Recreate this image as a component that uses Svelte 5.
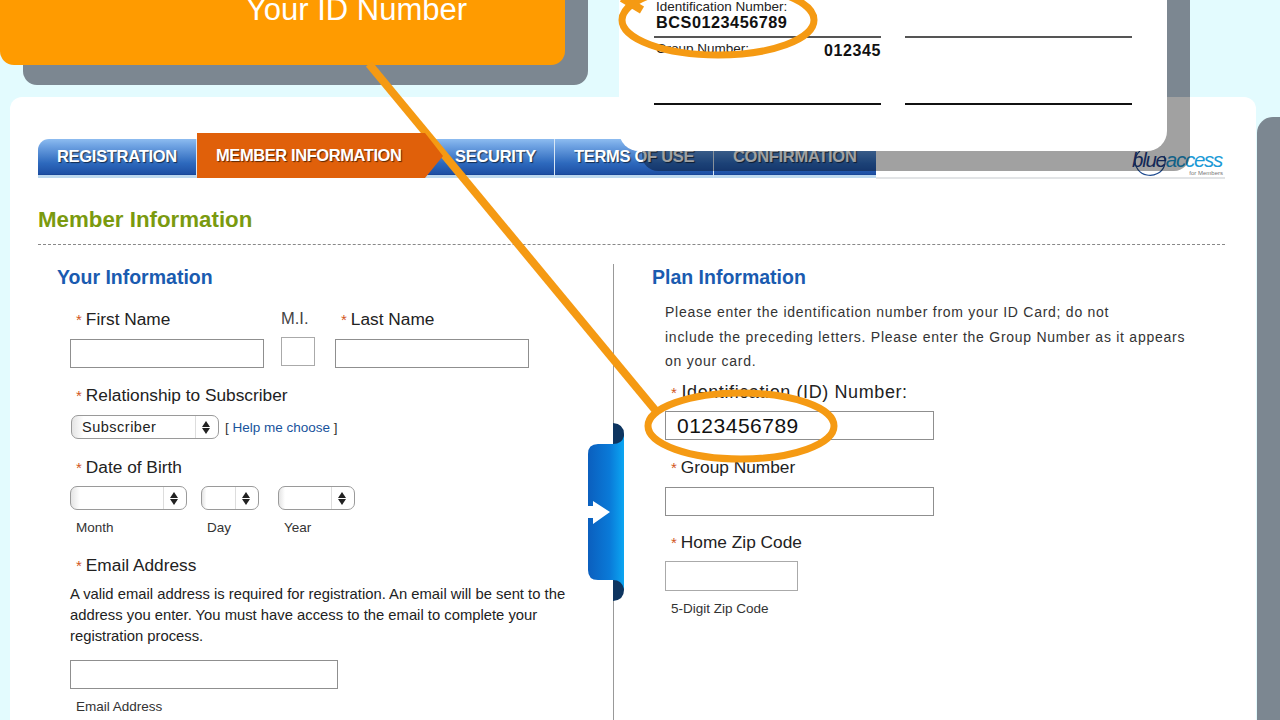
<script>
  const tabs = [
    { name: 'REGISTRATION', cls: 'first' },
    { name: 'MEMBER INFORMATION', cls: 'active' },
    { name: 'SECURITY', cls: 'security' },
    { name: 'TERMS OF USE', cls: 'terms' },
    { name: 'CONFIRMATION', cls: 'confirm' }
  ];
</script>

<div class="stage">
  <div class="side"></div>
  <div class="callout-shadow"></div>
  <div class="card-shadow"></div>

  <main class="sheet">
    <nav class="tabbar">
      {#each tabs as tab}
        <div class="tab {tab.cls}">{tab.name}</div>
      {/each}
      <div class="rest">
        <div class="logo">
          <svg class="ring" width="36" height="32" viewBox="0 0 36 32">
            <path d="M8 4 A15 14 0 1 0 32 9" fill="none" stroke="#1f4b8f" stroke-width="1.2" />
          </svg>
          <div class="logo-word"><span class="blue">blue</span><span class="access">access</span></div>
          <div class="logo-sub">for Members</div>
        </div>
      </div>
    </nav>

    <h2>Member Information</h2>

    <div class="columns">
      <section class="left">
        <h3>Your Information</h3>

        <div class="names">
          <div class="first-name">
            <div class="lbl"><b>*</b>First Name</div>
            <input class="box" type="text" />
          </div>
          <div class="mi">
            <div class="lbl plain">M.I.</div>
            <input class="box" type="text" />
          </div>
          <div class="last-name">
            <div class="lbl"><b>*</b>Last Name</div>
            <input class="box" type="text" />
          </div>
        </div>

        <div class="lbl rel"><b>*</b>Relationship to Subscriber</div>
        <div class="rel-row">
          <div class="sel sel-rel">Subscriber<span class="spin"></span></div>
          <span class="help">[ <a href="#help">Help me choose</a> ]</span>
        </div>

        <div class="lbl dob"><b>*</b>Date of Birth</div>
        <div class="dates">
          <div class="date month"><div class="sel"><span class="spin"></span></div><small>Month</small></div>
          <div class="date day"><div class="sel"><span class="spin"></span></div><small>Day</small></div>
          <div class="date year"><div class="sel"><span class="spin"></span></div><small>Year</small></div>
        </div>

        <div class="lbl email"><b>*</b>Email Address</div>
        <p class="note">A valid email address is required for registration. An email will be sent to the address you enter. You must have access to the email to complete your registration process.</p>
        <input class="box email-box" type="text" />
        <small class="email-sub">Email Address</small>
      </section>

      <section class="right">
        <h3>Plan Information</h3>
        <p class="plan-note">Please enter the identification number from your ID Card; do not<br />include the preceding letters. Please enter the Group Number as it appears<br />on your card.</p>

        <div class="lbl id-lbl"><b>*</b>Identification (ID) Number:</div>
        <input class="box wide id-box" type="text" value="0123456789" />

        <div class="lbl group-lbl"><b>*</b>Group Number</div>
        <input class="box wide group-box" type="text" />

        <div class="lbl zip-lbl"><b>*</b>Home Zip Code</div>
        <input class="box zip-box" type="text" />
        <small class="zip-sub">5-Digit Zip Code</small>
      </section>
    </div>
  </main>

  <div class="card-shade"></div>

  <div class="callout">Your ID Number</div>

  <div class="card">
    <div class="cell id-cell">
      <span>Identification Number:</span>
      <strong>BCS0123456789</strong>
    </div>
    <div class="cell"></div>
    <div class="cell group-cell">
      <span>Group Number:</span>
      <strong>012345</strong>
    </div>
    <div class="cell"></div>
  </div>

  <svg class="flap" width="36" height="178" viewBox="0 0 36 178">
    <defs>
      <linearGradient id="flapfill" x1="0" x2="1" y1="0" y2="0">
        <stop offset="0" stop-color="#0b5fbe" />
        <stop offset="0.6" stop-color="#0a7ad8" />
        <stop offset="1" stop-color="#0ba6f2" />
      </linearGradient>
    </defs>
    <path d="M25 24 V0 Q36 1 36 11 V167 Q36 177 25 178 V154 Q34 154 36 146 V32 Q34 24 25 24 Z" fill="#0e3560" />
    <path d="M10 21 H25 Q34 21 36 13 V166 Q34 157 25 157 H10 Q0 157 0 147 V31 Q0 21 10 21 Z" fill="url(#flapfill)" />
    <path d="M0 83 H5 V78 L22 89 L5 101 V95 H0 Z" fill="#fff" />
  </svg>

  <svg class="marks" width="1280" height="720" viewBox="0 0 1280 720">
    <path d="M369 64 L656 411" fill="none" stroke="#f59a13" stroke-width="8" />
    <ellipse cx="741" cy="426" rx="93" ry="33" fill="none" stroke="#f59a13" stroke-width="7" />
    <ellipse cx="718" cy="20" rx="96" ry="35" fill="none" stroke="#f59a13" stroke-width="7" />
    <path d="M622 -2 L642 10" fill="none" stroke="#f59a13" stroke-width="8" />
  </svg>
</div>

<style>
  :global(body) {
    margin: 0;
    background: #e3fbfe;
  }

  .stage {
    position: relative;
    width: 1280px;
    height: 720px;
    overflow: hidden;
    background: #e3fbfe;
    font-family: "Liberation Sans", Arial, sans-serif;
    color: #222;
  }

  /* things lying on top of the page */
  .side {
    position: absolute;
    left: 1257px;
    top: 117px;
    width: 60px;
    height: 640px;
    background: #7c8791;
    border-radius: 16px 0 0 0;
  }
  .callout-shadow {
    position: absolute;
    left: 23px;
    top: -30px;
    width: 565px;
    height: 115px;
    background: #7c8791;
    border-radius: 14px;
  }
  .card-shadow {
    position: absolute;
    left: 1100px;
    top: 0;
    width: 90px;
    height: 110px;
    background: #7c8791;
  }
  .card-shade {
    position: absolute;
    left: 642px;
    top: 97px;
    width: 548px;
    height: 74px;
    background: rgba(0, 0, 0, 0.37);
    border-radius: 0 0 16px 16px;
  }
  .callout {
    position: absolute;
    left: 0;
    top: -20px;
    width: 565px;
    height: 85px;
    box-sizing: border-box;
    padding: 12px 0 0 148px;
    text-align: center;
    background: #ff9b00;
    border-radius: 14px;
    color: #fff;
    font-size: 31px;
    line-height: 36px;
  }
  .card {
    position: absolute;
    left: 619px;
    top: -20px;
    width: 548px;
    height: 171px;
    box-sizing: border-box;
    padding: 20px 35px 0;
    background: #fff;
    border-radius: 0 0 20px 20px;
    display: grid;
    grid-template-columns: 227px 227px;
    grid-template-rows: 38px 67px;
    column-gap: 24px;
  }
  .cell {
    border-bottom: 2px solid #111;
    box-sizing: border-box;
    position: relative;
  }
  .cell:nth-child(-n+2) {
    border-bottom-color: #555;
  }
  .cell span {
    font-size: 13.5px;
    line-height: 14px;
    padding-left: 2px;
    display: block;
  }
  .cell strong {
    font-size: 16.3px;
    line-height: 17px;
    padding-left: 2px;
    letter-spacing: 0.5px;
    display: block;
    color: #111;
  }
  .group-cell {
    display: flex;
    justify-content: space-between;
    align-items: flex-start;
    padding-top: 4px;
  }
  .group-cell strong {
    letter-spacing: 0.6px;
    font-size: 16px;
  }
  .flap {
    position: absolute;
    left: 588px;
    top: 423px;
  }
  .marks {
    position: absolute;
    left: 0;
    top: 0;
  }

  /* the page itself */
  .sheet {
    position: relative;
    width: 1246px;
    height: 660px;
    margin-left: 10px;
    box-sizing: border-box;
    padding: 42px 31px 0 28px;
    background: #fff;
    border-radius: 12px;
    top: 97px;
  }
  .tabbar {
    display: flex;
    align-items: flex-start;
    height: 40px;
  }
  .tab {
    height: 39px;
    box-sizing: border-box;
    border-bottom: 3px solid #bcd8ee;
    color: #fff;
    font-size: 16.5px;
    font-weight: bold;
    letter-spacing: -0.3px;
    line-height: 35px;
    white-space: nowrap;
    text-shadow: 1px 1px 1px rgba(0, 0, 0, 0.6);
    background: linear-gradient(#8dbcf0 0%, #6ea2e2 18%, #2d69bd 62%, #1d4fa4 90%, #10307a 94%);
    background-origin: border-box;
    border-right: 1px solid #d8e6f4;
  }
  .first {
    width: 159px;
    padding-left: 19px;
    border-radius: 11px 0 0 0;
  }
  .active {
    position: relative;
    z-index: 1;
    width: 246px;
    height: 45px;
    margin-top: -6px;
    margin-right: -18px;
    padding-left: 19px;
    line-height: 44px;
    letter-spacing: -0.42px;
    border: 0;
    background: #e0600a;
    clip-path: polygon(0 0, 228px 0, 100% 23px, 228px 100%, 0 100%);
  }
  .security {
    width: 130px;
    padding-left: 30px;
  }
  .terms {
    width: 159px;
    padding-left: 19px;
  }
  .confirm {
    width: 162px;
    padding-left: 19px;
    border-right: 0;
  }
  .rest {
    flex: 1;
    height: 40px;
    border-bottom: 2px solid #e2e4e6;
    box-sizing: border-box;
    display: flex;
    justify-content: flex-end;
  }
  .logo {
    position: relative;
    width: 93px;
    height: 36px;
  }
  .ring {
    position: absolute;
    left: 0;
    top: 8px;
  }
  .logo-word {
    position: absolute;
    left: 0;
    top: 11px;
    font-size: 20.5px;
    line-height: 20px;
    font-style: italic;
    letter-spacing: -1.25px;
    white-space: nowrap;
  }
  .blue {
    color: #1d3f8a;
  }
  .access {
    color: #1b9ad6;
  }
  .logo-sub {
    position: absolute;
    right: 2px;
    top: 31px;
    font-size: 6px;
    line-height: 7px;
    color: #777;
  }

  h2 {
    margin: 28px 0 0;
    padding-bottom: 11px;
    border-bottom: 1px dashed #888;
    color: #7a9a0f;
    font-size: 22.3px;
    line-height: 26px;
  }
  h3 {
    margin: 0;
    color: #1a5bb0;
    font-size: 19.5px;
    line-height: 27px;
  }
  .columns {
    margin-top: 19px;
    display: grid;
    grid-template-columns: 576px 1fr;
  }
  .left {
    border-right: 1px solid #999;
    height: 470px;
    padding-left: 19px;
  }
  .right {
    padding-left: 38px;
  }

  .lbl {
    font-size: 17.3px;
    line-height: 20px;
    padding-left: 19px;
    white-space: nowrap;
  }
  .lbl b {
    color: #d2561c;
    font-weight: normal;
    font-size: 15px;
    margin-right: 4px;
  }
  .lbl.plain {
    padding-left: 0;
    color: #444;
    font-size: 16.5px;
    margin-top: -1px;
    margin-bottom: 1px;
  }
  .box {
    display: block;
    box-sizing: border-box;
    height: 29px;
    margin: 9px 0 0;
    padding: 0 11px;
    border: 1px solid #8f8f8f;
    background: #fff;
    outline: none;
    font-family: inherit;
    color: #111;
  }

  .names {
    display: flex;
    margin: 18px 0 0 13px;
  }
  .first-name .box {
    width: 194px;
  }
  .first-name .lbl,
  .last-name .lbl {
    padding-left: 6px;
  }
  .mi {
    margin-left: 17px;
  }
  .mi .box {
    width: 34px;
    margin-top: 9px;
    border-color: #aaa;
  }
  .last-name {
    margin-left: 20px;
  }
  .last-name .box {
    width: 194px;
  }

  .rel {
    margin: 17px 0 0 0;
  }
  .rel-row {
    display: flex;
    align-items: center;
    margin: 9px 0 0 14px;
  }
  .sel {
    position: relative;
    box-sizing: border-box;
    height: 24px;
    border: 1px solid #9a9a9a;
    border-radius: 7px;
    background: linear-gradient(90deg, #e4e4e4, #fff 8%);
    font-size: 14.5px;
    letter-spacing: 0.5px;
    line-height: 22px;
    padding-left: 10px;
  }
  .sel-rel {
    width: 148px;
  }
  .spin {
    position: absolute;
    right: 0;
    top: 0;
    bottom: 0;
    width: 22px;
    border-left: 1px solid #ddd;
  }
  .spin::before,
  .spin::after {
    content: "";
    position: absolute;
    left: 6px;
    border-left: 4px solid transparent;
    border-right: 4px solid transparent;
  }
  .spin::before {
    top: 5px;
    border-bottom: 6px solid #222;
  }
  .spin::after {
    bottom: 4px;
    border-top: 6px solid #222;
  }
  .help {
    margin-left: 6px;
    font-size: 13.5px;
    color: #333;
  }
  .help a {
    color: #17539c;
    text-decoration: none;
  }

  .dob {
    margin-top: 18px;
  }
  .dates {
    display: flex;
    margin: 8px 0 0 13px;
  }
  .date small,
  .email-sub,
  .zip-sub {
    display: block;
    font-size: 13.5px;
    line-height: 16px;
    color: #333;
  }
  .date small {
    margin: 10px 0 0 6px;
  }
  .month {
    width: 117px;
  }
  .day {
    width: 58px;
    margin-left: 14px;
  }
  .year {
    width: 77px;
    margin-left: 19px;
  }

  .email {
    margin-top: 19px;
  }
  .note {
    margin: 8px 0 0 13px;
    width: 505px;
    font-size: 14.8px;
    line-height: 21px;
  }
  .email-box {
    width: 268px;
    margin: 13px 0 0 13px;
  }
  .email-sub {
    margin: 10px 0 0 19px;
  }

  .plan-note {
    margin: 9px 0 0 13px;
    font-size: 14px;
    line-height: 24.5px;
    letter-spacing: 0.74px;
    color: #333;
    white-space: nowrap;
  }
  .id-lbl {
    margin-top: 8.5px;
    font-size: 18px;
    letter-spacing: 0.6px;
  }
  .wide {
    width: 269px;
    margin-left: 13px;
  }
  .id-box {
    margin-top: 8px;
    padding-top: 1px;
    font-size: 21px;
    letter-spacing: 0.5px;
  }
  .group-lbl {
    margin-top: 17px;
  }
  .zip-lbl {
    margin-top: 16px;
  }
  .zip-box {
    width: 133px;
    height: 30px;
    margin: 8px 0 0 13px;
    border-color: #aaa;
  }
  .zip-sub {
    margin: 10px 0 0 19px;
  }
</style>
